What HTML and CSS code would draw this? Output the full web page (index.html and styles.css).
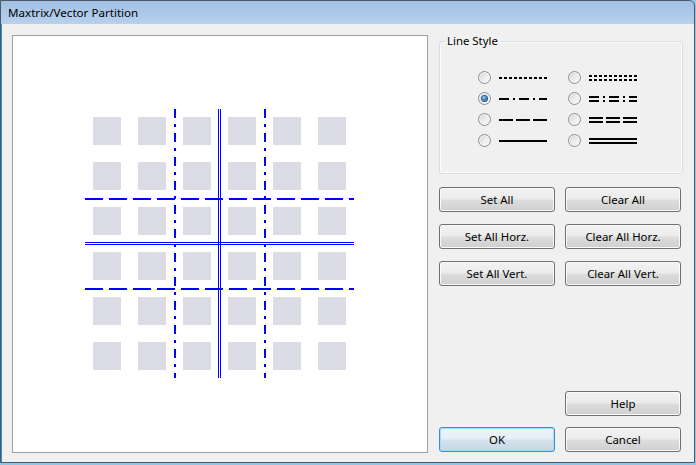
FILE: index.html
```html
<!DOCTYPE html>
<html>
<head>
<meta charset="utf-8">
<title>Maxtrix/Vector Partition</title>
<link rel="stylesheet" href="styles.css">
</head>
<body>
<div class="window">
  <div class="titlebar"><span class="title">Maxtrix/Vector Partition</span></div>
  <div class="client">
    <div class="canvas">
      <svg class="grid" width="414" height="416" viewBox="13 36 414 416" xmlns="http://www.w3.org/2000/svg">
        <g fill="#dcdce6">
          <rect x="93" y="117" width="28" height="28"/><rect x="138" y="117" width="28" height="28"/><rect x="183" y="117" width="28" height="28"/><rect x="228" y="117" width="28" height="28"/><rect x="273" y="117" width="28" height="28"/><rect x="318" y="117" width="28" height="28"/>
          <rect x="93" y="162" width="28" height="28"/><rect x="138" y="162" width="28" height="28"/><rect x="183" y="162" width="28" height="28"/><rect x="228" y="162" width="28" height="28"/><rect x="273" y="162" width="28" height="28"/><rect x="318" y="162" width="28" height="28"/>
          <rect x="93" y="207" width="28" height="28"/><rect x="138" y="207" width="28" height="28"/><rect x="183" y="207" width="28" height="28"/><rect x="228" y="207" width="28" height="28"/><rect x="273" y="207" width="28" height="28"/><rect x="318" y="207" width="28" height="28"/>
          <rect x="93" y="252" width="28" height="28"/><rect x="138" y="252" width="28" height="28"/><rect x="183" y="252" width="28" height="28"/><rect x="228" y="252" width="28" height="28"/><rect x="273" y="252" width="28" height="28"/><rect x="318" y="252" width="28" height="28"/>
          <rect x="93" y="297" width="28" height="28"/><rect x="138" y="297" width="28" height="28"/><rect x="183" y="297" width="28" height="28"/><rect x="228" y="297" width="28" height="28"/><rect x="273" y="297" width="28" height="28"/><rect x="318" y="297" width="28" height="28"/>
          <rect x="93" y="342" width="28" height="28"/><rect x="138" y="342" width="28" height="28"/><rect x="183" y="342" width="28" height="28"/><rect x="228" y="342" width="28" height="28"/><rect x="273" y="342" width="28" height="28"/><rect x="318" y="342" width="28" height="28"/>
        </g>
        <g stroke="#0000ff" shape-rendering="crispEdges" fill="none">
          <line x1="85" y1="199" x2="354" y2="199" stroke-width="2" stroke-dasharray="18 6"/>
          <line x1="85" y1="289" x2="354" y2="289" stroke-width="2" stroke-dasharray="18 6"/>
          <line x1="85" y1="242.5" x2="354" y2="242.5" stroke-width="1"/>
          <line x1="85" y1="244.5" x2="354" y2="244.5" stroke-width="1"/>
          <line x1="175" y1="109" x2="175" y2="378" stroke-width="2" stroke-dasharray="9 6 3 6"/>
          <line x1="265" y1="109" x2="265" y2="378" stroke-width="2" stroke-dasharray="9 6 3 6"/>
          <line x1="218.5" y1="109" x2="218.5" y2="378" stroke-width="1"/>
          <line x1="220.5" y1="109" x2="220.5" y2="378" stroke-width="1"/>
        </g>
      </svg>
    </div>
    <div class="panel">
      <fieldset class="group">
        <legend class="group-label">Line Style</legend>
        <div class="styles">
          <div class="opt"><span class="radio"></span>
            <svg class="sample" width="48" height="8" viewBox="0 0 48 8"><line x1="0" y1="4" x2="48" y2="4" stroke-width="2" stroke-dasharray="3 2"/></svg>
          </div>
          <div class="opt"><span class="radio"></span>
            <svg class="sample" width="48" height="8" viewBox="0 0 48 8"><line x1="0" y1="2" x2="48" y2="2" stroke-width="2" stroke-dasharray="3 2"/><line x1="0" y1="6" x2="48" y2="6" stroke-width="2" stroke-dasharray="3 2"/></svg>
          </div>
          <div class="opt"><span class="radio on"></span>
            <svg class="sample" width="48" height="8" viewBox="0 0 48 8"><line x1="0" y1="4" x2="48" y2="4" stroke-width="2" stroke-dasharray="10 4 2 4"/></svg>
          </div>
          <div class="opt"><span class="radio"></span>
            <svg class="sample" width="48" height="8" viewBox="0 0 48 8"><line x1="0" y1="2" x2="48" y2="2" stroke-width="2" stroke-dasharray="10 4 2 4"/><line x1="0" y1="6" x2="48" y2="6" stroke-width="2" stroke-dasharray="10 4 2 4"/></svg>
          </div>
          <div class="opt"><span class="radio"></span>
            <svg class="sample" width="48" height="8" viewBox="0 0 48 8"><line x1="0" y1="4" x2="48" y2="4" stroke-width="2" stroke-dasharray="14 3"/></svg>
          </div>
          <div class="opt"><span class="radio"></span>
            <svg class="sample" width="48" height="8" viewBox="0 0 48 8"><line x1="0" y1="2" x2="48" y2="2" stroke-width="2" stroke-dasharray="14 3"/><line x1="0" y1="6" x2="48" y2="6" stroke-width="2" stroke-dasharray="14 3"/></svg>
          </div>
          <div class="opt"><span class="radio"></span>
            <svg class="sample" width="48" height="8" viewBox="0 0 48 8"><line x1="0" y1="4" x2="48" y2="4" stroke-width="2"/></svg>
          </div>
          <div class="opt"><span class="radio"></span>
            <svg class="sample" width="48" height="8" viewBox="0 0 48 8"><line x1="0" y1="2" x2="48" y2="2" stroke-width="2"/><line x1="0" y1="6" x2="48" y2="6" stroke-width="2"/></svg>
          </div>
        </div>
      </fieldset>
      <div class="btns">
        <button class="btn">Set All</button>
        <button class="btn">Clear All</button>
        <button class="btn">Set All Horz.</button>
        <button class="btn">Clear All Horz.</button>
        <button class="btn">Set All Vert.</button>
        <button class="btn">Clear All Vert.</button>
      </div>
      <div class="btns bottom">
        <button class="btn help">Help</button>
        <button class="btn default">OK</button>
        <button class="btn">Cancel</button>
      </div>
    </div>
  </div>
</div>
</body>
</html>
```

FILE: styles.css
```css
html, body {
  margin: 0;
  padding: 0;
}
body {
  width: 696px;
  height: 465px;
  background: #8ec6ea;
  font-family: "Noto Sans", "Open Sans", "Liberation Sans", sans-serif;
  color: #000;
  overflow: hidden;
}
.window {
  width: 695px;
  height: 463px;
  box-sizing: border-box;
  border: 1px solid #4b5866;
  border-top-right-radius: 6px;
  background: #3f8fd0;
  padding-left: 1px;
  display: flex;
  flex-direction: column;
  overflow: hidden;
}
.titlebar {
  height: 23px;
  margin-left: -1px;
  flex: none;
  background: linear-gradient(to bottom, #a3c0e3 0%, #abc8e8 50%, #b8d1ec 100%);
  display: flex;
  align-items: center;
  padding: 1px 0 0 7px;
  box-sizing: border-box;
}
.title {
  font-size: 11.6px;
  line-height: 14px;
}
.client {
  flex: 1;
  background: #f0f0f0;
  display: flex;
  gap: 11px;
  padding: 11px 11px 9px 10px;
}
.canvas {
  width: 416px;
  height: 418px;
  box-sizing: border-box;
  border: 1px solid #a0a0a0;
  background: #fff;
  flex: none;
}
.grid {
  display: block;
}
.panel {
  width: 244px;
  display: flex;
  flex-direction: column;
}
.group {
  margin: 0;
  padding: 20px 0 22px 0;
  border: 1px solid #d5dfe5;
  border-radius: 3px;
  box-shadow: inset 0 0 0 1px #fbfbfb;
}
.group-label {
  margin-left: 5px;
  padding: 0 2px;
  font-size: 11.4px;
  line-height: 12px;
}
.styles {
  display: grid;
  grid-template-columns: 69px 69px;
  grid-auto-rows: 21px;
  column-gap: 21px;
  padding-left: 38px;
}
.opt {
  display: flex;
  align-items: center;
  gap: 8px;
}
.radio {
  width: 13px;
  height: 13px;
  box-sizing: border-box;
  border-radius: 50%;
  border: 1px solid #8e8f8f;
  background: linear-gradient(135deg, #cfcfcf 0%, #e9e9e9 45%, #fdfdfd 100%);
  box-shadow: inset 0 0 0 1px #f3f3f3;
  display: flex;
  align-items: center;
  justify-content: center;
  flex: none;
}
.radio.on::after {
  content: "";
  width: 5px;
  height: 5px;
  border-radius: 50%;
  background: radial-gradient(circle at 40% 35%, #a6dcfb 0%, #3a86c8 45%, #0d3563 100%);
  box-shadow: 0 0 0 1px #2a5d8d;
}
.sample {
  display: block;
  stroke: #000;
  shape-rendering: crispEdges;
}
.btns {
  display: grid;
  grid-template-columns: 116px 116px;
  grid-auto-rows: 25px;
  column-gap: 10px;
  row-gap: 12px;
  margin-top: 13px;
}
.btns.bottom {
  margin-top: auto;
  margin-bottom: 1px;
  row-gap: 11px;
}
.help {
  grid-column: 2;
}
.btn {
  font-family: "Noto Sans", "Open Sans", "Liberation Sans", sans-serif;
  font-size: 11.4px;
  color: #000;
  border: 1px solid #707070;
  border-radius: 3px;
  background: linear-gradient(to bottom, #f2f2f2 0%, #ebebeb 48%, #dddddd 52%, #cfcfcf 100%);
  box-shadow: inset 0 0 0 1px #fafafa;
  padding: 0;
  margin: 0;
  line-height: 14px;
}
.btn.default {
  border-color: #3c8fd0;
  background: linear-gradient(to bottom, #eef4f8 0%, #e5eef4 48%, #d4e2ec 52%, #c8d8e4 100%);
  box-shadow: inset 0 0 0 1px #9fdcf8;
}
```
